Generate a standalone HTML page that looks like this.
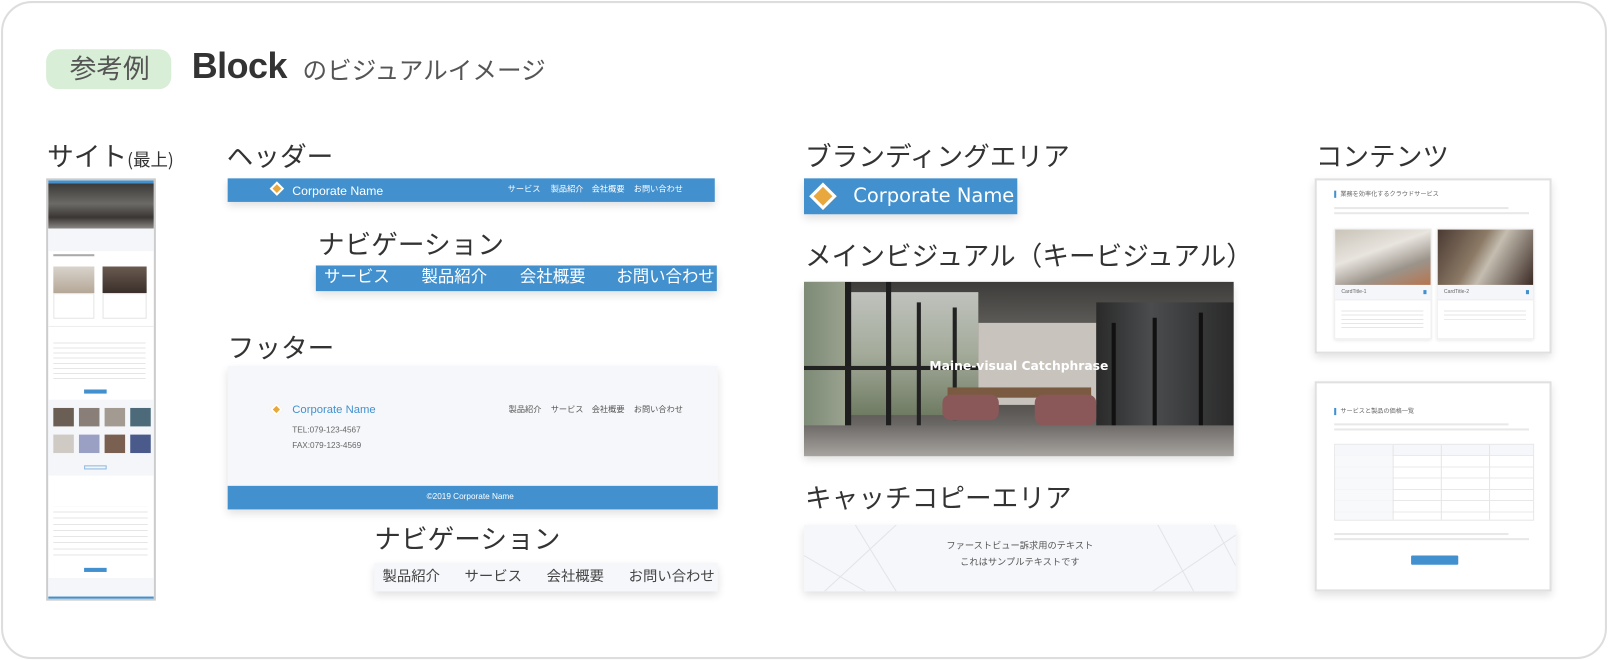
<!DOCTYPE html>
<html><head><meta charset="utf-8"><style>
*{margin:0;padding:0;box-sizing:border-box}
html,body{width:1608px;height:660px;overflow:hidden;background:#fff}
#w{position:absolute;left:0;top:0;width:1568px;height:644px;transform:scale(1.0255,1.025);transform-origin:0 0;font-family:"Liberation Sans","Noto Sans CJK JP",sans-serif}
.a{position:absolute}
.frame{left:1px;top:1px;width:1566px;height:642px;border:2px solid #ddd;border-radius:30px}
.lbl{position:absolute;font-size:26px;color:#333;font-family:"Noto Sans CJK JP",sans-serif;line-height:1;white-space:nowrap;letter-spacing:0}
.sh{box-shadow:0 4px 8px rgba(0,0,0,.12)}
.blue{background:#4291ce}
.dia{position:absolute;width:11px;height:11px;background:#e8a83e;border:2px solid #fff;transform:rotate(45deg)}
.t{position:absolute;white-space:nowrap;line-height:1}
</style></head><body><div id="w">
<div class="a frame"></div>

<div class="a" style="left:45px;top:48px;width:122px;height:39px;background:#d8eed6;border-radius:12px"></div>
<div class="lbl" style="left:68px;top:53px;font-size:26px;color:#555">参考例</div>
<div class="t" style="left:187px;top:47px;font-size:35px;font-weight:bold;color:#333;font-family:'Liberation Sans',sans-serif;letter-spacing:-0.5px">Block</div>
<div class="lbl" style="left:295px;top:55px;font-size:24px;color:#555">のビジュアルイメージ</div>

<div class="lbl" style="left:46px;top:139px">サイト<span style="font-size:17px">(最上)</span></div>
<div class="lbl" style="left:221px;top:139px">ヘッダー</div>
<div class="lbl" style="left:310px;top:225px">ナビゲーション</div>
<div class="lbl" style="left:222px;top:326px">フッター</div>
<div class="lbl" style="left:365px;top:512px">ナビゲーション</div>
<div class="lbl" style="left:785px;top:139px">ブランディングエリア</div>
<div class="lbl" style="left:785px;top:236px">メインビジュアル（キービジュアル）</div>
<div class="lbl" style="left:785px;top:472px">キャッチコピーエリア</div>
<div class="lbl" style="left:1283px;top:139px">コンテンツ</div>

<div class="a" style="left:45px;top:174px;width:107px;height:412px;border:2px solid #ccc;background:#fff;overflow:hidden">
 <div class="a blue" style="left:0;top:0;width:103px;height:3px"></div>
 <div class="a" style="left:0;top:3px;width:103px;height:44px;background:linear-gradient(180deg,#3b3a38 0%,#6b6a66 45%,#3a3633 75%,#8a8784 100%)"></div>
 <div class="a" style="left:0;top:47px;width:103px;height:22px;background:#f4f6fa"></div>
 <div class="a" style="left:5px;top:72px;width:40px;height:2px;background:#aaa"></div>
 <div class="a" style="left:5px;top:84px;width:40px;height:26px;background:linear-gradient(#d8d3cc,#b5a796)"></div>
 <div class="a" style="left:53px;top:84px;width:43px;height:26px;background:linear-gradient(#6a5a50,#3a2f2a)"></div>
 <div class="a" style="left:5px;top:110px;width:40px;height:25px;border:1px solid #e5e5e5"></div>
 <div class="a" style="left:53px;top:110px;width:43px;height:25px;border:1px solid #e5e5e5"></div>
 <div class="a" style="left:0;top:142px;width:103px;height:1px;background:#eee"></div>
 <div class="a" style="left:5px;top:154px;width:90px;height:40px;background:repeating-linear-gradient(#fff 0 4px,#e6e6e6 4px 5px)"></div>
 <div class="a blue" style="left:35px;top:204px;width:22px;height:4px"></div>
 <div class="a" style="left:0;top:214px;width:103px;height:74px;background:#f4f6fa"></div>
 <div class="a" style="left:5px;top:222px;width:20px;height:18px;background:#6a5e55"></div>
 <div class="a" style="left:30px;top:222px;width:20px;height:18px;background:#8a7f78"></div>
 <div class="a" style="left:55px;top:222px;width:20px;height:18px;background:#a39b92"></div>
 <div class="a" style="left:80px;top:222px;width:20px;height:18px;background:#4c6a7a"></div>
 <div class="a" style="left:5px;top:248px;width:20px;height:18px;background:#cfcac3"></div>
 <div class="a" style="left:30px;top:248px;width:20px;height:18px;background:#9aa0c4"></div>
 <div class="a" style="left:55px;top:248px;width:20px;height:18px;background:#7a6050"></div>
 <div class="a" style="left:80px;top:248px;width:20px;height:18px;background:#4a5a8a"></div>
 <div class="a" style="left:35px;top:278px;width:22px;height:4px;border:1px solid #8bb8e0"></div>
 <div class="a" style="left:5px;top:318px;width:92px;height:48px;background:repeating-linear-gradient(#fff 0 5px,#e6e6e6 5px 6px)"></div>
 <div class="a blue" style="left:35px;top:378px;width:22px;height:4px"></div>
 <div class="a" style="left:0;top:388px;width:103px;height:22px;background:#f4f6fa"></div>
 <div class="a blue" style="left:0;top:406px;width:103px;height:3px"></div>
</div>

<div class="a blue sh" style="left:222px;top:174px;width:475px;height:23px"></div>
<div class="dia" style="left:265px;top:179px;width:10px;height:10px"></div>
<div class="t" style="left:285px;top:180px;font-size:12px;color:#fff">Corporate Name</div>
<div class="t" style="left:495px;top:181px;font-size:8px;color:#fff">サービス</div>
<div class="t" style="left:537px;top:181px;font-size:8px;color:#fff">製品紹介</div>
<div class="t" style="left:577px;top:181px;font-size:8px;color:#fff">会社概要</div>
<div class="t" style="left:618px;top:181px;font-size:8px;color:#fff">お問い合わせ</div>

<div class="a blue sh" style="left:308px;top:259px;width:391px;height:25px"></div>
<div class="t" style="left:316px;top:263px;font-size:16px;color:#fff">サービス</div>
<div class="t" style="left:411px;top:263px;font-size:16px;color:#fff">製品紹介</div>
<div class="t" style="left:507px;top:263px;font-size:16px;color:#fff">会社概要</div>
<div class="t" style="left:601px;top:263px;font-size:16px;color:#fff">お問い合わせ</div>

<div class="a sh" style="left:222px;top:357px;width:478px;height:140px;background:#f6f7fa"></div>
<div class="a blue" style="left:222px;top:474px;width:478px;height:23px"></div>
<div class="dia" style="left:265px;top:395px;width:9px;height:9px"></div>
<div class="t" style="left:285px;top:395px;font-size:11px;color:#4291ce">Corporate Name</div>
<div class="t" style="left:285px;top:416px;font-size:8px;color:#666">TEL:079-123-4567</div>
<div class="t" style="left:285px;top:431px;font-size:8px;color:#666">FAX:079-123-4569</div>
<div class="t" style="left:496px;top:396px;font-size:8px;color:#555">製品紹介</div>
<div class="t" style="left:537px;top:396px;font-size:8px;color:#555">サービス</div>
<div class="t" style="left:577px;top:396px;font-size:8px;color:#555">会社概要</div>
<div class="t" style="left:618px;top:396px;font-size:8px;color:#555">お問い合わせ</div>
<div class="t" style="left:416px;top:481px;font-size:8px;color:#fff">©2019 Corporate Name</div>

<div class="a sh" style="left:365px;top:549px;width:335px;height:28px;background:#f6f7fa"></div>
<div class="t" style="left:373px;top:555px;font-size:14px;color:#444">製品紹介</div>
<div class="t" style="left:453px;top:555px;font-size:14px;color:#444">サービス</div>
<div class="t" style="left:533px;top:555px;font-size:14px;color:#444">会社概要</div>
<div class="t" style="left:613px;top:555px;font-size:14px;color:#444">お問い合わせ</div>

<div class="a blue sh" style="left:784px;top:174px;width:208px;height:35px"></div>
<div class="dia" style="left:793px;top:182px;width:19px;height:19px;border-width:3px"></div>
<div class="t" style="left:832px;top:182px;font-size:19px;color:#fff;font-family:'DejaVu Sans',sans-serif">Corporate Name</div>

<div class="a sh" style="left:784px;top:275px;width:419px;height:170px;overflow:hidden;background:linear-gradient(180deg,#3e3c3a 0%,#5a5855 22%,#6d6b67 45%,#4a4643 60%,#5d5a57 75%,#8e8c89 100%)">
 <div class="a" style="left:0;top:0;width:40px;height:170px;background:linear-gradient(90deg,#7c8a76,#9aa28e)"></div>
 <div class="a" style="left:40px;top:10px;width:130px;height:120px;background:linear-gradient(180deg,#bfc2bd 0%,#a4ab9a 50%,#6f7b63 100%)"></div>
 <div class="a" style="left:40px;top:0;width:6px;height:140px;background:#1e1e1e"></div>
 <div class="a" style="left:80px;top:0;width:5px;height:140px;background:#1e1e1e"></div>
 <div class="a" style="left:110px;top:20px;width:4px;height:120px;background:#222"></div>
 <div class="a" style="left:145px;top:25px;width:4px;height:110px;background:#222"></div>
 <div class="a" style="left:0;top:82px;width:170px;height:4px;background:#222"></div>
 <div class="a" style="left:170px;top:40px;width:115px;height:80px;background:#c8c4bd"></div>
 <div class="a" style="left:285px;top:20px;width:134px;height:130px;background:linear-gradient(90deg,#2a2a2a,#4a4c4e 40%,#2a2a2a)"></div>
 <div class="a" style="left:300px;top:40px;width:4px;height:110px;background:#111"></div>
 <div class="a" style="left:340px;top:35px;width:4px;height:115px;background:#111"></div>
 <div class="a" style="left:385px;top:30px;width:4px;height:120px;background:#111"></div>
 <div class="a" style="left:140px;top:103px;width:140px;height:10px;background:#7a5a40"></div>
 <div class="a" style="left:135px;top:110px;width:55px;height:25px;background:#8a5858;border-radius:8px"></div>
 <div class="a" style="left:225px;top:110px;width:60px;height:30px;background:#8a5858;border-radius:8px"></div>
 <div class="a" style="left:0;top:140px;width:419px;height:30px;background:linear-gradient(180deg,#6e6b68,#a7a4a0)"></div>
 <div class="t" style="left:0;width:419px;text-align:center;top:76px;font-size:12px;font-weight:bold;color:#fff;font-family:'DejaVu Sans',sans-serif">Maine-visual Catchphrase</div>
</div>

<div class="a sh" style="left:784px;top:512px;width:421px;height:65px;background:#f6f7fa;overflow:hidden">
 <svg width="421" height="65" style="position:absolute;left:0;top:0"><g stroke="#e2e4ea" stroke-width="1" fill="none"><line x1="50" y1="0" x2="90" y2="65"/><line x1="0" y1="30" x2="60" y2="65"/><line x1="90" y1="0" x2="20" y2="65"/><line x1="345" y1="0" x2="380" y2="65"/><line x1="421" y1="10" x2="340" y2="65"/><line x1="400" y1="0" x2="421" y2="40"/></g></svg>
 <div class="t" style="left:0;width:421px;text-align:center;top:16px;font-size:9px;color:#555">ファーストビュー訴求用のテキスト</div>
 <div class="t" style="left:0;width:421px;text-align:center;top:32px;font-size:9px;color:#555">これはサンプルテキストです</div>
</div>

<div class="a sh" style="left:1282px;top:174px;width:231px;height:171px;border:2px solid #e0e0e0;background:#fff">
 <div class="a blue" style="left:17px;top:10px;width:2px;height:7px"></div>
 <div class="t" style="left:23px;top:11px;font-size:6px;color:#666">業務を効率化するクラウドサービス</div>
 <div class="a" style="left:17px;top:26px;width:170px;height:2px;background:#e8e8e8"></div>
 <div class="a" style="left:17px;top:31px;width:190px;height:2px;background:#e8e8e8"></div>
 <div class="a" style="left:17px;top:47px;width:95px;height:108px;border:1px solid #eee;box-shadow:0 1px 3px rgba(0,0,0,.1)">
  <div class="a" style="left:0;top:0;width:93px;height:54px;background:linear-gradient(160deg,#c9c3b8,#e8e4de 40%,#9b948b 70%,#b7754f)"></div>
  <div class="a" style="left:0;top:54px;width:93px;height:15px;background:#f5f6f9;border-bottom:1px solid #eee"></div>
  <div class="t" style="left:6px;top:59px;font-size:5px;color:#666">CardTitle-1</div>
  <div class="a" style="left:86px;top:59px;width:3px;height:4px;background:#4291ce"></div>
  <div class="a" style="left:6px;top:76px;width:80px;height:20px;background:repeating-linear-gradient(#fff 0 3px,#e6e6e6 3px 4px)"></div>
 </div>
 <div class="a" style="left:117px;top:47px;width:95px;height:108px;border:1px solid #eee;box-shadow:0 1px 3px rgba(0,0,0,.1)">
  <div class="a" style="left:0;top:0;width:93px;height:54px;background:linear-gradient(120deg,#4a3a32,#8c7a66 40%,#c4bdb0 55%,#3a2a24)"></div>
  <div class="a" style="left:0;top:54px;width:93px;height:15px;background:#f5f6f9;border-bottom:1px solid #eee"></div>
  <div class="t" style="left:6px;top:59px;font-size:5px;color:#666">CardTitle-2</div>
  <div class="a" style="left:86px;top:59px;width:3px;height:4px;background:#4291ce"></div>
  <div class="a" style="left:6px;top:76px;width:80px;height:12px;background:repeating-linear-gradient(#fff 0 3px,#e6e6e6 3px 4px)"></div>
 </div>
</div>

<div class="a sh" style="left:1282px;top:372px;width:231px;height:205px;border:2px solid #e0e0e0;background:#fff">
 <div class="a blue" style="left:17px;top:24px;width:2px;height:7px"></div>
 <div class="t" style="left:23px;top:25px;font-size:6px;color:#666">サービスと製品の価格一覧</div>
 <div class="a" style="left:17px;top:39px;width:170px;height:2px;background:#e8e8e8"></div>
 <div class="a" style="left:17px;top:44px;width:190px;height:2px;background:#e8e8e8"></div>
 <div class="a" style="left:17px;top:59px;width:195px;height:75px;border:1px solid #e6e6e6;background:repeating-linear-gradient(#fff 0 10px,#e8e8e8 10px 11px)">
  <div class="a" style="left:0;top:0;width:56px;height:73px;background:#f6f7fa;opacity:.8"></div>
  <div class="a" style="left:0;top:0;width:193px;height:10px;background:#f6f7fa"></div>
  <div class="a" style="left:56px;top:0;width:1px;height:73px;background:#e6e6e6"></div>
  <div class="a" style="left:103px;top:0;width:1px;height:73px;background:#e6e6e6"></div>
  <div class="a" style="left:150px;top:0;width:1px;height:73px;background:#e6e6e6"></div>
 </div>
 <div class="a" style="left:17px;top:146px;width:170px;height:2px;background:#e8e8e8"></div>
 <div class="a" style="left:17px;top:151px;width:190px;height:2px;background:#e8e8e8"></div>
 <div class="a blue" style="left:92px;top:168px;width:46px;height:9px;border-radius:1px"></div>
</div>

</div></body></html>
